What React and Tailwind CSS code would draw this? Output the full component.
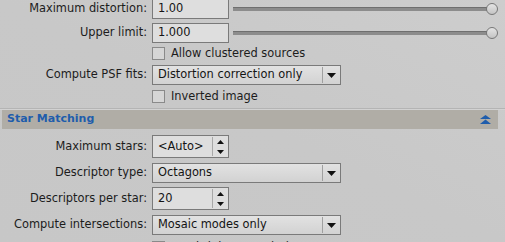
import React from "react";

const font = { fontFamily: '"DejaVu Sans", Verdana, sans-serif' };

function Label({ children }) {
  return (
    <div className="w-[147px] shrink-0 text-right text-[11.4px] text-[#1c1c1c] whitespace-nowrap">
      {children}
    </div>
  );
}

function Slider() {
  return (
    <div className="ml-[4px] mr-[7px] flex-1 flex items-center relative h-[14px]">
      <div className="flex-1 h-[4px] bg-[#8c8c8c] border-t border-[#6f6f6f]" />
      <div className="w-[12px] h-[12px] -ml-[1px] rounded-full border border-[#777] bg-gradient-to-b from-[#e4e4e4] to-[#c4c4c4]" />
    </div>
  );
}

function TextBox({ value, w = "w-[77px]" }) {
  return (
    <div className={`ml-[5px] ${w} h-[20px] bg-[#dedede] border border-[#7a7a7a] flex items-center pl-[5px] text-[11.4px] text-[#141414]`}>
      {value}
    </div>
  );
}

function Combo({ value }) {
  return (
    <div className="ml-[5px] w-[189px] h-[20px] bg-gradient-to-b from-[#e2e2e2] to-[#d2d2d2] border border-[#7a7a7a] flex items-center text-[11.4px] text-[#141414]">
      <div className="flex-1 pl-[5px]">{value}</div>
      <div className="w-[1px] h-[16px] bg-[#a0a0a0]" />
      <div className="w-[17px] flex items-center justify-center">
        <svg width="9" height="5" viewBox="0 0 9 5">
          <polygon points="0,0 9,0 4.5,5" fill="#111" />
        </svg>
      </div>
    </div>
  );
}

function Spin({ value }) {
  return (
    <div className="ml-[5px] w-[77px] h-[23px] bg-[#dedede] border border-[#7a7a7a] flex items-center text-[11.4px] text-[#141414]">
      <div className="flex-1 pl-[5px]">{value}</div>
      <div className="w-[1px] h-[19px] bg-[#a8a8a8]" />
      <div className="w-[15px] h-full flex flex-col items-center justify-center gap-[6px]">
        <svg width="7" height="4" viewBox="0 0 7 4">
          <polygon points="3.5,0 7,4 0,4" fill="#111" />
        </svg>
        <svg width="7" height="4" viewBox="0 0 7 4">
          <polygon points="0,0 7,0 3.5,4" fill="#111" />
        </svg>
      </div>
    </div>
  );
}

function Check({ label, checked }) {
  return (
    <div className="flex items-center">
      <div className="w-[152px] shrink-0" />
      <div className="w-[13px] h-[13px] bg-[#d6d6d6] border border-[#8a8a8a] flex items-center justify-center">
        {checked && (
          <svg width="9" height="9" viewBox="0 0 9 9">
            <polyline points="1,4.5 3.5,7 8,1.5" fill="none" stroke="#222" strokeWidth="1.5" />
          </svg>
        )}
      </div>
      <div className="ml-[6px] text-[11.4px] text-[#1c1c1c] whitespace-nowrap">{label}</div>
    </div>
  );
}

export default function App() {
  return (
    <div
      className="w-[505px] h-[242px] overflow-hidden bg-gradient-to-bl from-[#cdcdcd] via-[#c8c8c8] to-[#c7c7c7]"
      style={font}
    >
      <div className="flex flex-col -mt-[3px]">
        <div className="flex items-center h-[24px]">
          <Label>Maximum distortion:</Label>
          <TextBox value="1.00" />
          <Slider />
        </div>
        <div className="flex items-center h-[24px]">
          <Label>Upper limit:</Label>
          <TextBox value="1.000" />
          <Slider />
        </div>
        <div className="h-[18px] flex items-center">
          <Check label="Allow clustered sources" />
        </div>
        <div className="flex items-center h-[24px]">
          <Label>Compute PSF fits:</Label>
          <Combo value="Distortion correction only" />
        </div>
        <div className="h-[19px] flex items-center">
          <Check label="Inverted image" />
        </div>
        <div className="mt-[2px] h-[1px] bg-[#b4b4b4]" />
        <div className="h-[1px] bg-[#d2d2d2]" />
        <div className="ml-[2px] mr-[7px] h-[19px] bg-[#b0ada6] flex items-center justify-between pl-[5px] pr-[7px]">
          <div className="text-[11px] font-bold text-[#1f5dac]">Star Matching</div>
          <svg width="11" height="9" viewBox="0 0 11 9">
            <polygon points="5.5,0 11,4 0,4" fill="#1f5dac" />
            <polygon points="5.5,4.6 11,9 0,9" fill="#1f5dac" />
          </svg>
        </div>
        <div className="mt-[6px] flex items-center h-[23px]">
          <Label>Maximum stars:</Label>
          <Spin value="<Auto>" />
        </div>
        <div className="mt-[5px] flex items-center h-[20px]">
          <Label>Descriptor type:</Label>
          <Combo value="Octagons" />
        </div>
        <div className="mt-[4px] flex items-center h-[23px]">
          <Label>Descriptors per star:</Label>
          <Spin value="20" />
        </div>
        <div className="mt-[5px] flex items-center h-[20px]">
          <Label>Compute intersections:</Label>
          <Combo value="Mosaic modes only" />
        </div>
        <div className="mt-[4px]">
          <Check label="Use brightness relations" checked />
        </div>
      </div>
    </div>
  );
}
